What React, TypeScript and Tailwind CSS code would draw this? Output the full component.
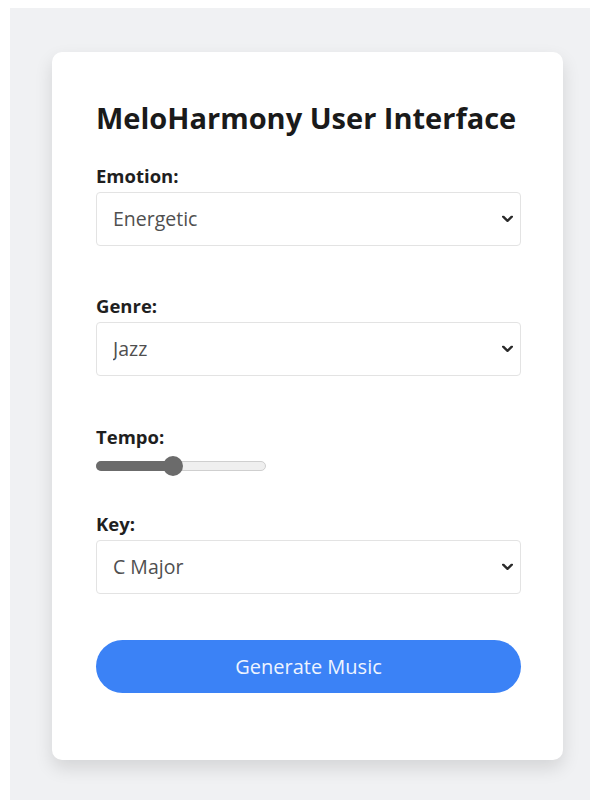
import React, { useState } from "react";

const EMOTIONS = ["Energetic", "Calm", "Happy", "Sad", "Romantic"];
const GENRES = ["Jazz", "Pop", "Rock", "Classical", "Electronic"];
const KEYS = ["C Major", "G Major", "D Major", "A Minor", "E Minor"];

const Chevron = () => (
  <svg
    width="11"
    height="7"
    viewBox="0 0 11 7"
    className="pointer-events-none absolute right-[8px] top-1/2 -translate-y-1/2"
  >
    <path
      d="M1.2 1.2 L5.5 5.3 L9.8 1.2"
      fill="none"
      stroke="#2a2a2a"
      strokeWidth="2.4"
      strokeLinecap="round"
      strokeLinejoin="round"
    />
  </svg>
);

type SelectProps = {
  value: string;
  options: string[];
  onChange: (v: string) => void;
};

const Select = ({ value, options, onChange }: SelectProps) => (
  <div className="relative mt-[4px] h-[54px] w-full">
    <select
      value={value}
      onChange={(e) => onChange(e.target.value)}
      className="h-full w-full appearance-none rounded-[4px] border border-[#e3e3e3] bg-white pl-[16px] text-[19.5px] text-[#4f4f4f] outline-none"
    >
      {options.map((o) => (
        <option key={o}>{o}</option>
      ))}
    </select>
    <Chevron />
  </div>
);

const Label = ({ children, className = "" }: { children: React.ReactNode; className?: string }) => (
  <label className={`block h-[24px] text-[18.5px] font-bold leading-[24px] text-[#1f1f1f] ${className}`}>
    {children}
  </label>
);

const App = () => {
  const [emotion, setEmotion] = useState("Energetic");
  const [genre, setGenre] = useState("Jazz");
  const [key, setKey] = useState("C Major");
  const [tempo] = useState(45);

  return (
    <div className="h-[800px] w-[590px] overflow-hidden bg-white font-['Open_Sans',sans-serif]">
      <div className="ml-[10px] mt-[8px] h-[792px] bg-[#f0f1f3] pt-[44px]">
        <div className="ml-[42px] h-[708px] w-[511px] rounded-[10px] bg-white pl-[44px] pr-[42px] pt-[48px] shadow-[0_8px_18px_rgba(0,0,0,0.12)]">
          <h1 className="h-[36px] text-[29px] font-bold leading-[36px] text-[#1a1a1a]">
            MeloHarmony User Interface
          </h1>

          <Label className="mt-[28px]">Emotion:</Label>
          <Select value={emotion} options={EMOTIONS} onChange={setEmotion} />

          <Label className="mt-[48px]">Genre:</Label>
          <Select value={genre} options={GENRES} onChange={setGenre} />

          <Label className="mt-[49px]">Tempo:</Label>
          {/* tempo slider */}
          <div className="relative mt-[7px] flex h-[20px] w-[170px] items-center">
            <div className="h-[10px] w-full rounded-full border border-[#cfcfcf] bg-[#efefef]" />
            <div
              className="absolute left-0 h-[10px] rounded-full bg-[#6b6b6b]"
              style={{ width: `${tempo}%` }}
            />
            <div
              className="absolute h-[20px] w-[20px] -translate-x-1/2 rounded-full bg-[#6b6b6b]"
              style={{ left: `${tempo}%` }}
            />
          </div>

          <Label className="mt-[36px]">Key:</Label>
          <Select value={key} options={KEYS} onChange={setKey} />

          <button className="mt-[46px] h-[53px] w-full rounded-full bg-[#3b82f6] text-[20px] text-[#eef4ff]">
            Generate Music
          </button>
        </div>
      </div>
    </div>
  );
};

export default App;
